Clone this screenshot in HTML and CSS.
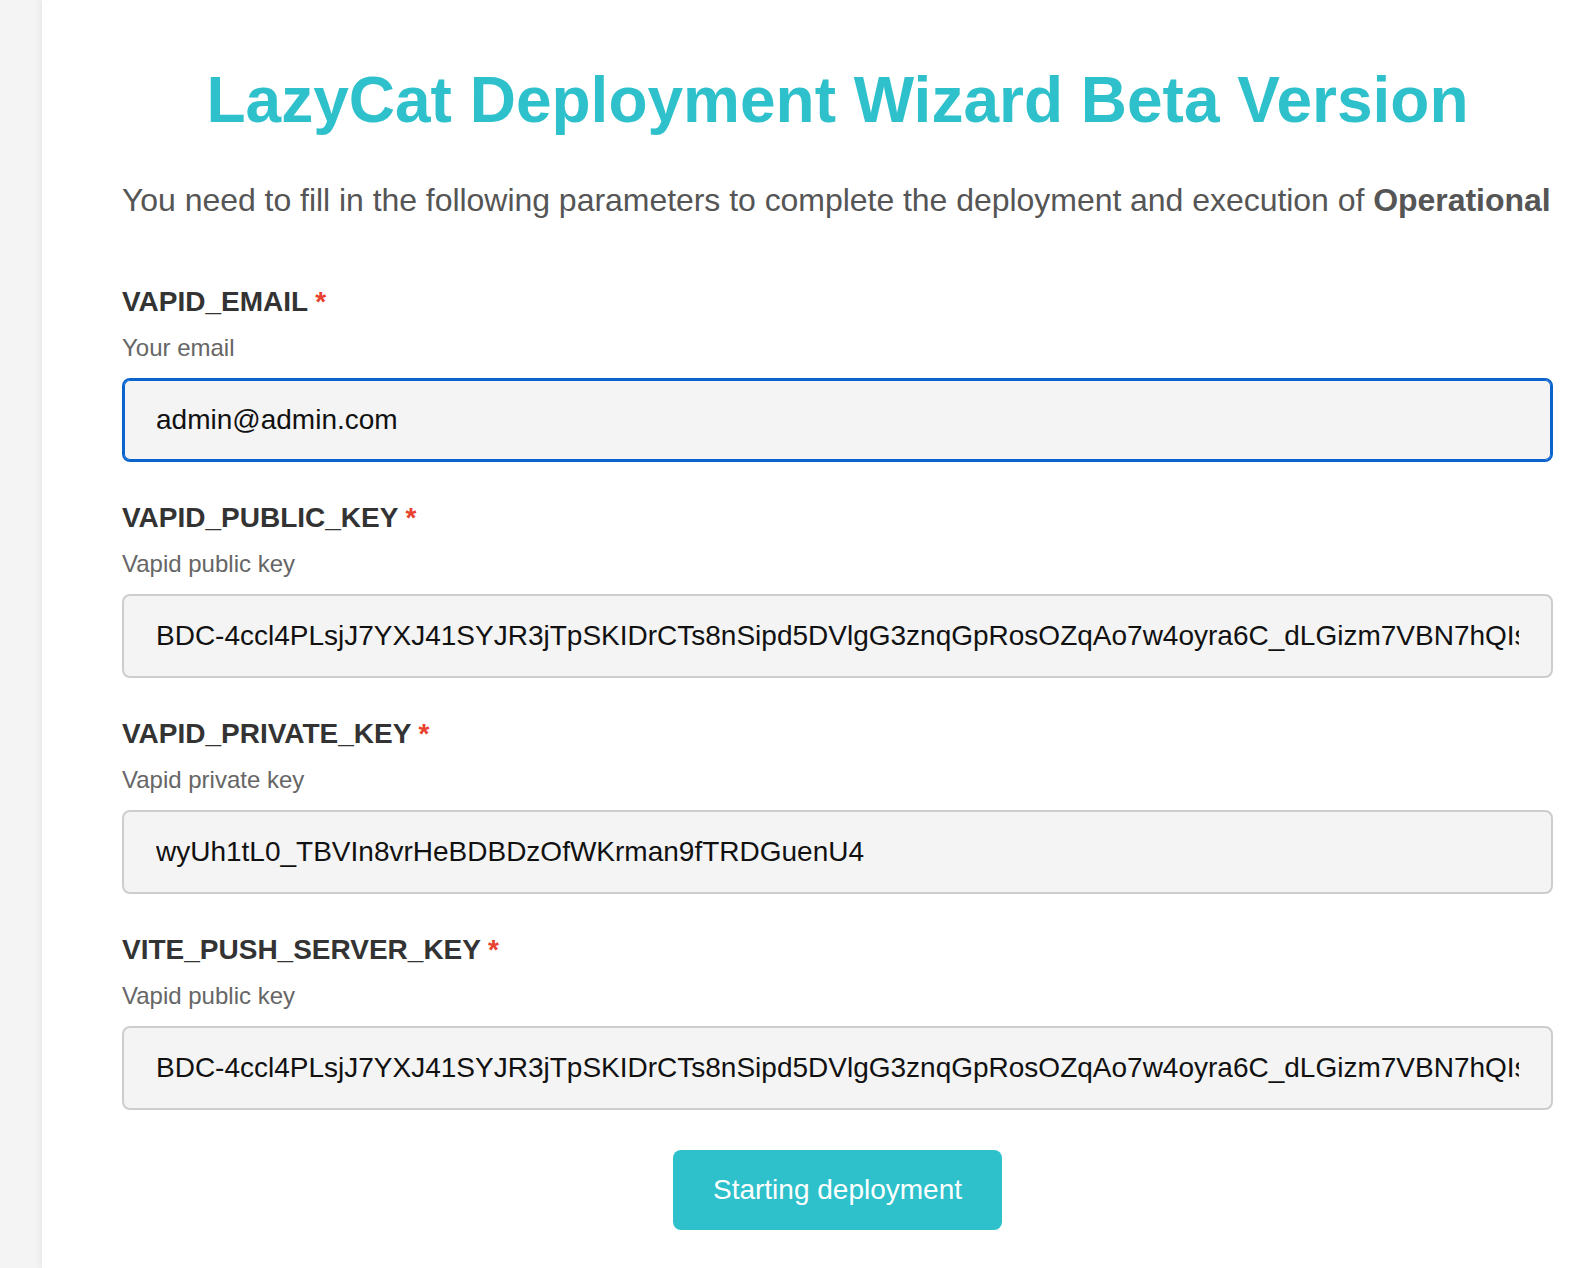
FILE: index.html
```html
<!DOCTYPE html>
<html lang="en">
<head>
    <meta charset="UTF-8">
    <meta name="viewport" content="width=device-width, initial-scale=1.0">
    <title>LazyCat Deployment Wizard</title>
    <link rel="stylesheet" href="styles.css">
</head>
<body>

    <!-- Barra lateral -->
    <aside class="sidebar"></aside>

    <main class="wizard">
        <h1 class="wizard-title">LazyCat Deployment Wizard Beta Version</h1>
        <p class="wizard-intro">You need to fill in the following parameters to complete the deployment and execution of <b>Operational</b></p>

        <form class="wizard-form" id="form-deploy">
            <div class="field">
                <label for="vapid_email">VAPID_EMAIL<span class="required">*</span></label>
                <div class="hint">Your email</div>
                <input type="text" id="vapid_email" class="is-focused" value="admin@admin.com">
            </div>

            <div class="field">
                <label for="vapid_public_key">VAPID_PUBLIC_KEY<span class="required">*</span></label>
                <div class="hint">Vapid public key</div>
                <input type="text" id="vapid_public_key" value="BDC-4ccl4PLsjJ7YXJ41SYJR3jTpSKIDrCTs8nSipd5DVlgG3znqGpRosOZqAo7w4oyra6C_dLGizm7VBN7hQIs">
            </div>

            <div class="field">
                <label for="vapid_private_key">VAPID_PRIVATE_KEY<span class="required">*</span></label>
                <div class="hint">Vapid private key</div>
                <input type="text" id="vapid_private_key" value="wyUh1tL0_TBVIn8vrHeBDBDzOfWKrman9fTRDGuenU4">
            </div>

            <div class="field">
                <label for="vite_push_server_key">VITE_PUSH_SERVER_KEY<span class="required">*</span></label>
                <div class="hint">Vapid public key</div>
                <input type="text" id="vite_push_server_key" value="BDC-4ccl4PLsjJ7YXJ41SYJR3jTpSKIDrCTs8nSipd5DVlgG3znqGpRosOZqAo7w4oyra6C_dLGizm7VBN7hQIs">
            </div>

            <button type="button" class="btn-deploy">Starting deployment</button>
        </form>
    </main>

    <script>
        // Dejar el cursor al final del correo
        var email = document.getElementById("vapid_email");
        email.focus();
        email.setSelectionRange(email.value.length, email.value.length);
    </script>

</body>
</html>
```

FILE: styles.css
```css
/* Estilo general */
html, body {
    height: 100%;
}

body {
    margin: 0;
    display: flex;
    font-family: "Liberation Sans", Arial, sans-serif;
    background-color: #f4f4f4;
    overflow: hidden;
}

.sidebar {
    width: 42px;
    flex-shrink: 0;
    background-color: #f4f4f4;
}

/* Contenido principal */
.wizard {
    flex: 1;
    min-width: 0;
    background-color: #fff;
    box-shadow: -2px 0 6px rgba(0, 0, 0, 0.06);
    padding: 63px 39px 37px 80px;
    display: flex;
    flex-direction: column;
}

.wizard-title {
    margin: 0 0 39px;
    font-size: 64px;
    line-height: 74px;
    font-weight: bold;
    text-align: center;
    color: #2ec1cb;
}

.wizard-intro {
    margin: 0 0 62px;
    font-size: 32px;
    line-height: 48px;
    letter-spacing: -0.04px;
    color: #555;
    white-space: nowrap;
    overflow: hidden;
}

.wizard-intro b {
    color: #555;
}

/* Formulario */
.wizard-form {
    display: flex;
    flex-direction: column;
    gap: 40px;
}

.field {
    display: flex;
    flex-direction: column;
}

.field label {
    font-size: 28px;
    line-height: 32px;
    font-weight: bold;
    color: #333;
    margin-bottom: 14px;
}

.field .required {
    color: #e8412e;
    margin-left: 7px;
}

.field .hint {
    font-size: 24px;
    line-height: 32px;
    color: #666;
    margin-bottom: 14px;
}

.field input {
    box-sizing: border-box;
    width: 100%;
    height: 84px;
    padding: 25px 32px;
    font-family: "Liberation Sans", Arial, sans-serif;
    font-size: 28px;
    line-height: 30px;
    color: #111;
    background-color: #f4f4f4;
    border: 2px solid #cdcdcd;
    border-radius: 8px;
    outline: none;
}

.field input.is-focused,
.field input:focus {
    border-color: #0b63ce;
    box-shadow: inset 0 0 0 1px #0b63ce;
}

/* Botón de despliegue */
.btn-deploy {
    align-self: center;
    padding: 24px 40px;
    font-family: "Liberation Sans", Arial, sans-serif;
    font-size: 28px;
    line-height: 32px;
    color: #fff;
    background-color: #2ec1cb;
    border: none;
    border-radius: 8px;
    cursor: pointer;
}
```
